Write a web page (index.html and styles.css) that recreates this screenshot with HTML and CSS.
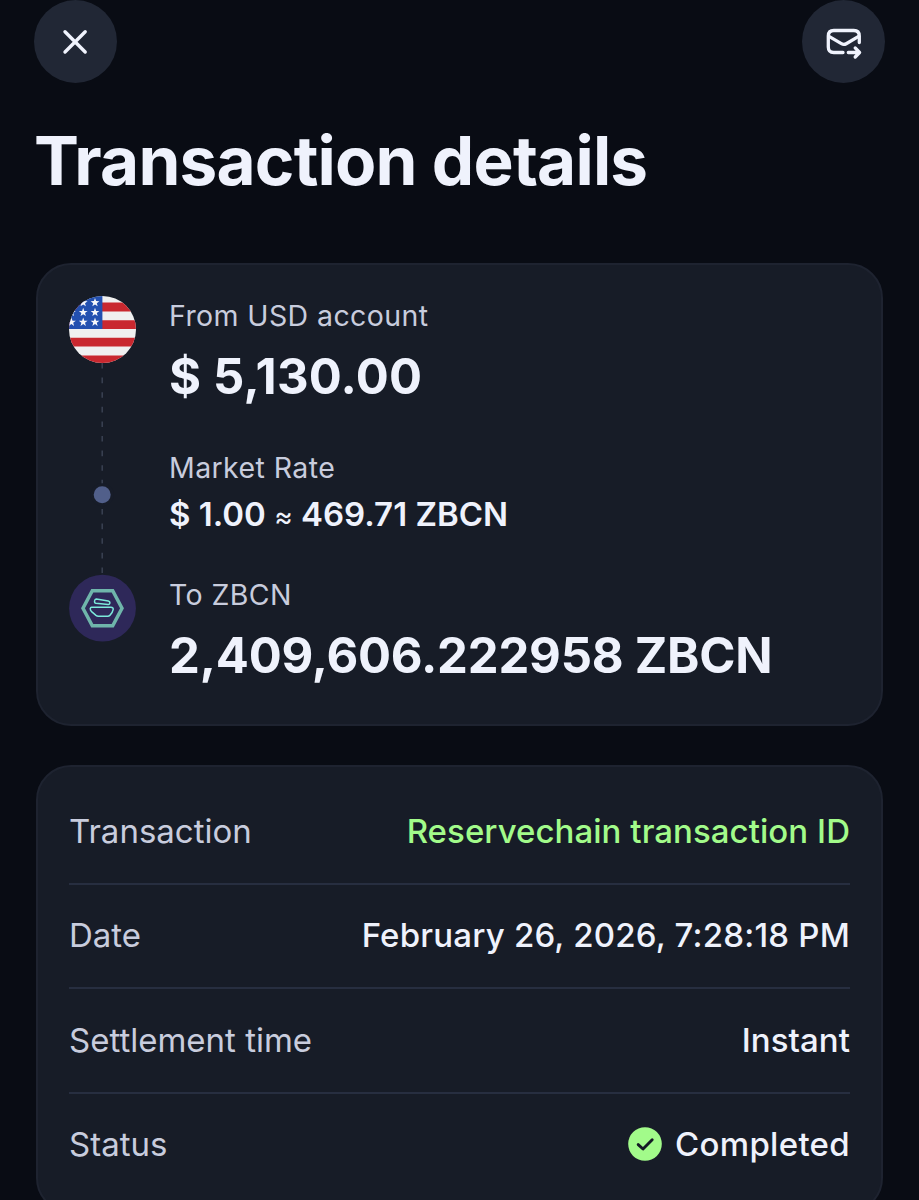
FILE: index.html
```
<!DOCTYPE html>
<html lang="en">
<head>
<meta charset="utf-8">
<title>Transaction details</title>
<link rel="stylesheet" href="styles.css">
</head>
<body>
<main class="screen">
  <header class="topbar">
    <button class="round-btn" aria-label="Close">
      <svg width="83" height="83" viewBox="0 0 83 83" fill="none" stroke="#f0f3fd" stroke-width="3.4" stroke-linecap="round">
        <path d="M31 31.8 51.2 52M51.2 31.8 31 52"/>
      </svg>
    </button>
    <button class="round-btn" aria-label="Send by email">
      <svg width="83" height="83" viewBox="0 0 83 83" fill="none" stroke="#f0f3fd" stroke-width="3.3" stroke-linecap="round" stroke-linejoin="round">
        <path d="M41 52.5H31.8Q26.3 52.5 26.3 47V36Q26.3 30.5 31.8 30.5H51.8Q57.3 30.5 57.3 36V42.5"/>
        <path d="M27 36.3 39.4 43.7Q41.8 45.1 44.2 43.7L56.6 36.3"/>
        <path d="M46.3 52.5H57M53.2 47.9 57.6 52.5 53.2 57"/>
      </svg>
    </button>
  </header>

  <h1 class="title">Transaction details</h1>

  <section class="card exchange">
    <svg class="timeline" width="67" height="346" viewBox="0 0 67 346">
      <defs>
        <clipPath id="disc"><circle cx="33.5" cy="33.5" r="33.5"/></clipPath>
        <path id="star" d="M0-4.6 1.1-1.5 4.4-1.4 1.8.6 2.7 3.7 0 1.9-2.7 3.7-1.8.6-4.4-1.4-1.1-1.5Z"/>
      </defs>
      <path d="M33.2 67V279" stroke="#3c4456" stroke-width="1.4" stroke-dasharray="5.6 9"/>
      <g clip-path="url(#disc)">
        <path fill="#f0f0f0" d="M0 0h67v67H0z"/>
        <path fill="#c9282f" d="M0 6.6h67v8.9H0zM0 24.2h67v8.8H0zM0 41.8h67v8.8H0zM0 59.4h67v8H0z"/>
        <path fill="#2350b0" d="M0 0h33.4v33H0z"/>
        <g fill="#f5f6fa">
          <use href="#star" x="26" y="6.6"/><use href="#star" x="14.2" y="6.6"/>
          <use href="#star" x="26" y="16.4"/><use href="#star" x="14.2" y="16.4"/><use href="#star" x="2.4" y="16.4"/>
          <use href="#star" x="26" y="26.2"/><use href="#star" x="14.2" y="26.2"/><use href="#star" x="2.4" y="26.2"/>
        </g>
      </g>
      <circle cx="33.2" cy="198.7" r="11.5" fill="#171c28"/>
      <circle cx="33.2" cy="198.7" r="8.5" fill="#515f8a"/>
      <circle cx="33.5" cy="312.2" r="33.4" fill="#2e2859"/>
      <path d="M23.3 294.8H43.7L53 312.3 43.7 329.8H23.3L14 312.3Z" fill="none" stroke="#6fb5ab" stroke-width="3.5"/>
      <g fill="none" stroke="#7ceadb" stroke-width="1.5" stroke-linejoin="round">
        <path d="M22.5 311.3H42Q44.4 311.4 44.2 313.3 43.8 316.2 40.8 319.4 40 320.2 38.8 320.2H29.2Q28 320.2 27 319.4L22.6 315.6Q21 314 21.3 312.5 21.5 311.3 22.5 311.3Z"/>
        <path d="M27.3 302.9 39.3 304.9Q41 305.3 40.9 306.7 40.8 308.5 39.2 308.4L27 307.3Q25.2 307 25.6 304.8 25.9 302.8 27.3 302.9Z"/>
      </g>
    </svg>
    <dl class="legs">
      <div class="leg">
        <dt class="leg-label">From USD account</dt>
        <dd class="amount amount-from">$ 5,130.00</dd>
      </div>
      <div class="leg leg-rate">
        <dt class="leg-label">Market Rate</dt>
        <dd class="rate">$ 1.00 <span class="approx">≈</span> 469.71 ZBCN</dd>
      </div>
      <div class="leg">
        <dt class="leg-label">To ZBCN</dt>
        <dd class="amount amount-to">2,409,606.222958 ZBCN</dd>
      </div>
    </dl>
  </section>

  <dl class="card details">
    <div class="row">
      <dt class="row-label">Transaction</dt>
      <dd class="row-value link">Reservechain transaction ID</dd>
    </div>
    <div class="row">
      <dt class="row-label">Date</dt>
      <dd class="row-value date">February 26, 2026, 7:28:18 PM</dd>
    </div>
    <div class="row">
      <dt class="row-label">Settlement time</dt>
      <dd class="row-value">Instant</dd>
    </div>
    <div class="row">
      <dt class="row-label">Status</dt>
      <dd class="row-value status">
        <svg class="check" width="34" height="34" viewBox="0 0 34 34">
          <circle cx="17" cy="17" r="16.8" fill="#a2fb8a"/>
          <path d="M10.2 17.6 15 22 24.2 12.7" fill="none" stroke="#141a24" stroke-width="2.9" stroke-linecap="round" stroke-linejoin="round"/>
        </svg>
        <span>Completed</span>
      </dd>
    </div>
  </dl>
</main>
</body>
</html>
```
FILE: styles.css
```
* { box-sizing: border-box; }

body {
  margin: 0;
  background: #090c14;
  color: #eff2fc;
  font-family: Inter, "Liberation Sans", sans-serif;
}

.screen {
  height: 1200px;
  padding: 0 36px;
  overflow: hidden;
}

.topbar {
  display: flex;
  justify-content: space-between;
  margin: 0 -2px;
}

.round-btn {
  width: 83px;
  height: 83px;
  padding: 0;
  border: 0;
  border-radius: 50%;
  background: #212735;
}

.round-btn svg { display: block; }

.title {
  margin: 38px 0 0 -2px;
  font-size: 67.4px;
  line-height: 80px;
  font-weight: 700;
  letter-spacing: -0.8px;
  white-space: nowrap;
}

.card {
  border: 2px solid #1e2330;
  border-radius: 35px;
  background: #171c27;
}

.exchange {
  display: flex;
  gap: 33px;
  height: 463px;
  margin-top: 62px;
  padding: 31px;
}

.timeline { flex: none; }

.legs { margin: 0; white-space: nowrap; }
.leg dd { margin: 0; }

.leg-label {
  font-size: 28.5px;
  line-height: 40px;
  font-weight: 400;
  letter-spacing: 0.4px;
  color: #c8ccdd;
}

.amount {
  padding-top: 10px;
  font-size: 49px;
  line-height: 60px;
  font-weight: 700;
}

.amount-from { padding-top: 11px; letter-spacing: 0.2px; }
.amount-to { padding-top: 11px; letter-spacing: -0.22px; }

.leg-rate { margin: 41px 0 37px; }

.rate {
  padding-top: 4px;
  font-size: 33px;
  line-height: 44px;
  font-weight: 600;
}

.approx { font-weight: 400; font-size: 28px; }

.details {
  height: 448px;
  margin: 39px 0 0;
  padding: 13px 31px 0;
}

.row {
  display: flex;
  align-items: center;
  justify-content: space-between;
  height: 104.5px;
  padding-bottom: 1px;
  border-bottom: 2px solid #272e40;
  white-space: nowrap;
}

.row:last-child { border-bottom-color: transparent; }

.row-label {
  font-size: 33px;
  font-weight: 400;
  letter-spacing: 0;
  color: #c8ccdd;
}

.row-value {
  margin: 0;
  font-size: 33px;
  font-weight: 500;
  letter-spacing: 0.05px;
}

.link { color: #a2fb8a; }
.date { letter-spacing: 0.2px; }

.status {
  display: flex;
  align-items: center;
  gap: 13px;
  letter-spacing: 0.3px;
}
```
